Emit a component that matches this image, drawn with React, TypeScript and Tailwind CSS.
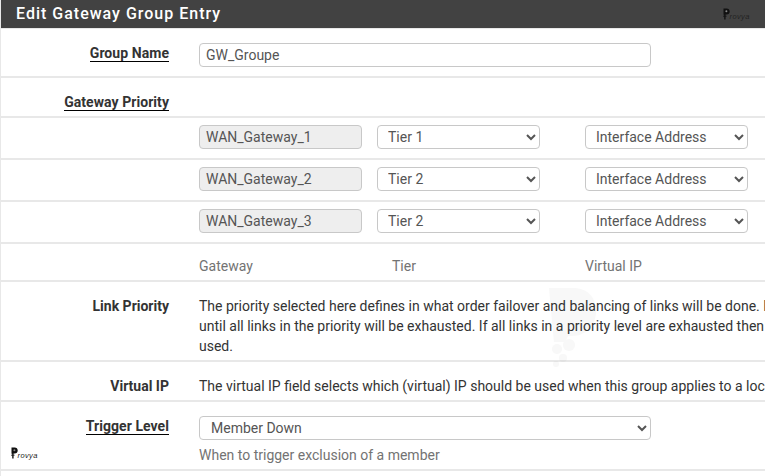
import type { ReactNode } from "react";

const inputBase =
  "h-[24px] rounded-[4px] border border-[#c8c8c8] px-[6px] text-[14px] text-[#555] outline-none";
const selectBase =
  "block h-[24px] rounded-[4px] border border-[#c8c8c8] bg-white text-[14px] text-[#555] outline-none";

const gateways = [
  { name: "WAN_Gateway_1", tier: "Tier 1" },
  { name: "WAN_Gateway_2", tier: "Tier 2" },
  { name: "WAN_Gateway_3", tier: "Tier 2" },
];

function Logo() {
  return (
    <div className="flex w-[26px] items-end leading-none text-black">
      <svg width="7" height="12" viewBox="0 0 7 12" className="shrink-0">
        <path d="M0.5 0.5h3.2c1.8 0 3 1.2 3 2.9s-1.2 3-3 3H2.6v5H1.2v-4.6H0.5z" fill="#111" />
        <circle cx="3.4" cy="3.3" r="1" fill="#888" />
        <path d="M0 8.2h3.6" stroke="#111" strokeWidth="0.8" />
      </svg>
      <span className="-ml-[0.5px] font-['Liberation_Sans',sans-serif] text-[7.5px] italic tracking-[0.4px] text-[#222]">rovya</span>
    </div>
  );
}

function Row({ label, className, children }: { label?: ReactNode; className: string; children?: ReactNode }) {
  return (
    <div className={`flex border-b-2 border-[#e8e8e8] ${className}`}>
      <div className="w-[168px] shrink-0 text-right">{label}</div>
      <div className="ml-[30px] min-w-0 flex-1">{children}</div>
    </div>
  );
}

function Heading({ children }: { children: ReactNode }) {
  return <span className="border-b-[1.5px] border-black font-bold tracking-[0.06px] text-[#333]">{children}</span>;
}

export default function App() {
  return (
    <div className="relative h-[476px] w-[765px] overflow-hidden border-l border-[#e8e8e8] bg-white font-['Roboto',sans-serif] text-[14px] leading-[20px] text-[#333]">
      <div className="flex h-[28px] items-center justify-between bg-[#424242] pl-[15px] pr-[16px]">
        <h2 className="text-[16px] font-medium tracking-[1px] text-white">Edit Gateway Group Entry</h2>
        <Logo />
      </div>

      <div>
        <Row className="h-[50px] border-t border-t-[#e8e8e8] pt-[14px]" label={<Heading>Group Name</Heading>}>
          <input readOnly value="GW_Groupe" className={`${inputBase} block w-[452px]`} />
        </Row>

        <Row className="h-[40px] pt-[14px]" label={<Heading>Gateway Priority</Heading>} />

        {gateways.map((gw) => (
          <Row key={gw.name} className="h-[42px] items-start pt-[7px]">
            <div className="flex">
              <input
                readOnly
                disabled
                value={gw.name}
                className={`${inputBase} w-[163px] bg-[#eeeeee]`}
              />
              <select defaultValue={gw.tier} className={`${selectBase} ml-[15px] w-[163px] pl-[6px]`}>
                <option>Tier 1</option>
                <option>Tier 2</option>
              </select>
              <select className={`${selectBase} ml-[45px] w-[163px] pl-[6px]`}>
                <option>Interface Address</option>
              </select>
            </div>
          </Row>
        ))}

        <Row className="h-[38px] pt-[12px] text-[#737373]">
          <div className="flex">
            <span className="w-[193px]">Gateway</span>
            <span className="w-[193px]">Tier</span>
            <span>Virtual IP</span>
          </div>
        </Row>

        <Row className="h-[80px] pt-[14px]" label={<span className="font-bold">Link Priority</span>}>
          <p className="whitespace-nowrap">
            The priority selected here defines in what order failover and balancing of links will be done. Multiple links of the same priority will balance connections
            <br />
            until all links in the priority will be exhausted. If all links in a priority level are exhausted then the next available link(s) in the next priority level will be
            <br />
            used.
          </p>
        </Row>

        <Row className="h-[40px] pt-[14px]" label={<span className="font-bold">Virtual IP</span>}>
          <p className="whitespace-nowrap">
            The virtual IP field selects which (virtual) IP should be used when this group applies to a local Dynamic DNS, IPsec or OpenVPN endpoint.
          </p>
        </Row>

        <Row className="h-[69px] pt-[14px]" label={<Heading>Trigger Level</Heading>}>
          <select className={`${selectBase} w-[452px] pl-[7px]`}>
            <option>Member Down</option>
          </select>
          <p className="mt-[5px] text-[#737373]">When to trigger exclusion of a member</p>
        </Row>
      </div>

      <div className="absolute left-[10px] top-[447px]">
        <Logo />
      </div>
      <svg
        width="50"
        height="82"
        viewBox="0 0 50 82"
        className="absolute left-[547px] top-[287px] opacity-[0.025]"
      >
        <path d="M1 1h24c14 0 23 9 23 23s-10 25-24 25h-4l-3 6H6z" fill="#000" />
        <circle cx="21" cy="58" r="6" fill="#000" />
        <circle cx="9" cy="62" r="5" fill="#000" />
        <circle cx="15" cy="71" r="4" fill="#000" />
        <circle cx="8" cy="77" r="3" fill="#000" />
      </svg>
    </div>
  );
}
